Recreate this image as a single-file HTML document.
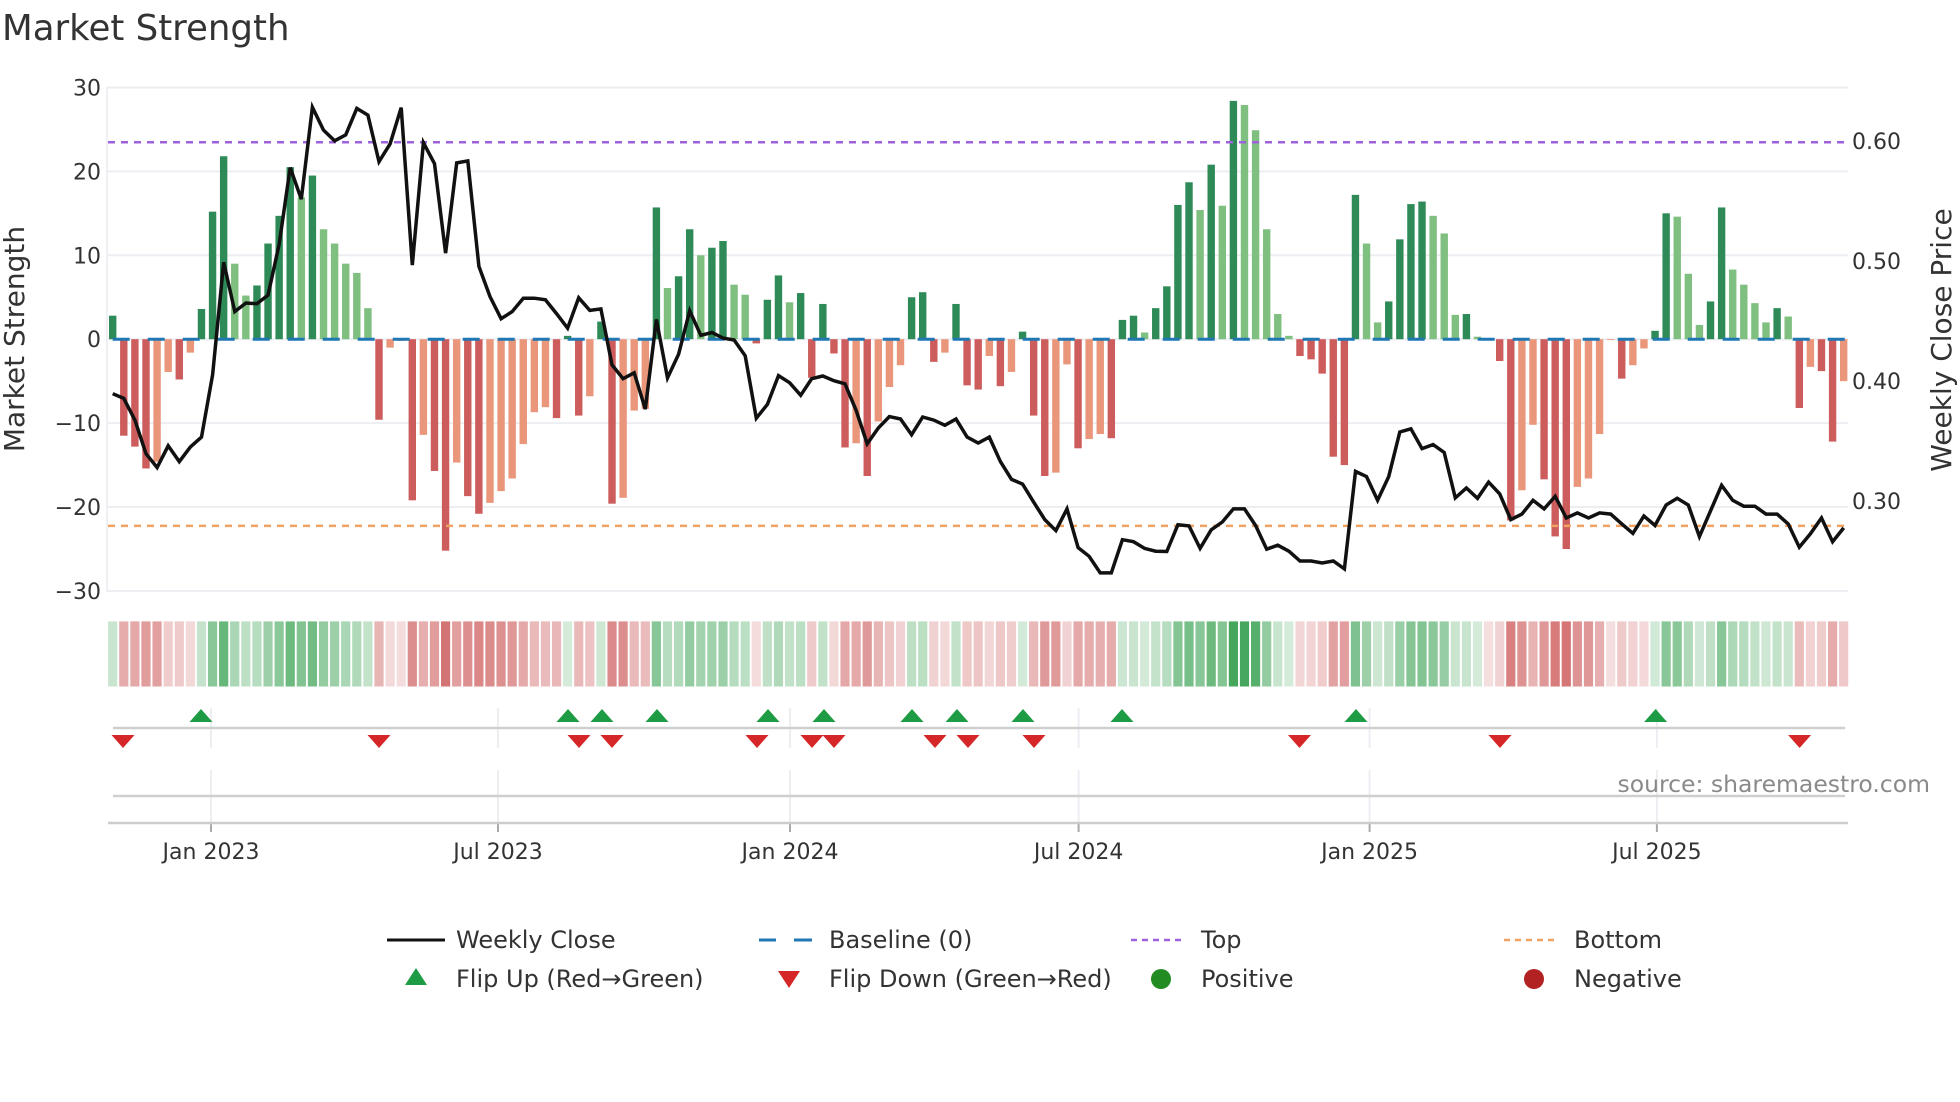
<!DOCTYPE html>
<html><head><meta charset="utf-8">
<style>
html,body{margin:0;padding:0;background:#fff;}
svg{display:block;font-family:"DejaVu Sans","Liberation Sans",sans-serif;}
</style></head>
<body>
<svg id="c" width="1960" height="1102" viewBox="0 0 1960 1102" xmlns="http://www.w3.org/2000/svg">
<text x="2" y="40" font-size="35.6" fill="#333">Market Strength</text>
<text x="16" y="339" font-size="28" fill="#333" text-anchor="middle" dominant-baseline="middle" transform="rotate(-90 16 339)">Market Strength</text>
<text x="1943" y="340" font-size="28" fill="#333" text-anchor="middle" dominant-baseline="middle" transform="rotate(-90 1943 340)">Weekly Close Price</text>
<g id="g"></g>
<text x="1930" y="792" font-size="23.5" fill="#8a8a8a" text-anchor="end">source: sharemaestro.com</text>
<g font-size="24" fill="#333">
<line x1="387" y1="940" x2="445" y2="940" stroke="#111" stroke-width="3"/>
<text x="456" y="948">Weekly Close</text>
<line x1="759" y1="940" x2="812" y2="940" stroke="#1f77b4" stroke-width="3" stroke-dasharray="17 18"/>
<line x1="794" y1="940" x2="812" y2="940" stroke="#1f77b4" stroke-width="3"/>
<text x="829" y="948">Baseline (0)</text>
<line x1="1131" y1="940" x2="1185" y2="940" stroke="#9d62dc" stroke-width="2.5" stroke-dasharray="6 5"/>
<text x="1201" y="948">Top</text>
<line x1="1504" y1="940" x2="1559" y2="940" stroke="#f0a263" stroke-width="2.5" stroke-dasharray="6 5"/>
<text x="1574" y="948">Bottom</text>
<polygon points="416,968 405,985 427,985" fill="#1e9b45"/>
<text x="456" y="987">Flip Up (Red→Green)</text>
<polygon points="778,971 800,971 789,988" fill="#d62728"/>
<text x="829" y="987">Flip Down (Green→Red)</text>
<circle cx="1161" cy="979" r="10" fill="#228b22"/>
<text x="1201" y="987">Positive</text>
<circle cx="1534" cy="979" r="10" fill="#b22222"/>
<text x="1574" y="987">Negative</text>
</g>
</svg>
<script>
(function(){
var NS="http://www.w3.org/2000/svg",g=document.getElementById("g");
function el(t,a){var e=document.createElementNS(NS,t);for(var k in a)e.setAttribute(k,a[k]);g.appendChild(e);return e;}
var V=[2.8,-11.5,-12.8,-15.4,-14.6,-3.9,-4.8,-1.6,3.6,15.2,21.8,9.0,5.2,6.4,11.4,14.7,20.5,16.9,19.5,13.1,11.4,9.0,7.9,3.7,-9.6,-1.0,-0.2,-19.2,-11.4,-15.7,-25.2,-14.7,-18.7,-20.8,
-19.5,-18.1,-16.6,-12.5,-8.7,-8.1,-9.4,0.4,-9.1,-6.8,2.1,-19.6,-18.9,-8.5,-8.3,15.7,6.1,7.5,13.1,10.0,10.9,11.7,6.5,5.3,-0.5,4.7,7.6,4.4,5.5,-4.6,4.2,
-1.7,-12.9,-12.4,-16.3,-9.8,-5.7,-3.1,5.0,5.6,-2.7,-1.6,4.2,-5.5,-6.0,-2.0,-5.6,-3.9,0.9,-9.1,-16.3,-15.9,-3.0,-13.0,-11.9,-11.3,-11.8,2.3,2.8,0.8,3.7,6.3,16.0,18.7,15.4,
20.8,15.9,28.4,27.9,24.9,13.1,3.0,0.4,-2.0,-2.4,-4.1,-14.0,-15.0,17.2,11.4,2.0,4.5,11.9,16.1,16.4,14.7,12.6,2.9,3.0,0.3,-0.1,-2.6,-21.6,-18.0,-10.2,-16.7,-23.5,
-25.0,-17.6,-16.6,-11.3,-0.1,-4.7,-3.1,-1.1,1.0,15.0,14.6,7.8,1.7,4.5,15.7,8.3,6.5,4.3,2.0,3.7,2.7,-8.2,-3.3,-3.8,-12.2,-5.0];
var P=[818,830,885,970,1005,950,990,953,928,770,485,610,588,590,568,440,245,325,92,150,177,162,95,112,230,185,93,492,182,235,462,233,228,495,
572,628,610,576,576,580,615,652,575,607,603,745,780,765,857,630,778,718,608,670,663,677,682,722,880,845,772,790,822,780,
773,785,793,860,945,905,876,882,922,877,885,898,882,928,943,928,990,1035,1047,1093,1137,1165,1110,1208,1230,1272,1272,1188,1193,1210,1217,1218,1150,
1153,1210,1163,1143,1110,1110,1152,1212,1202,1217,1242,1242,1247,1242,1262,1015,1028,1088,1028,915,907,957,947,967,1082,1057,1083,1042,1072,1137,1123,1088,
1110,1078,1133,1120,1133,1120,1123,1148,1172,1128,1152,1100,1083,1100,1180,1115,1050,1088,1103,1103,1123,1123,1148,1207,1173,1133,1193,1158];
var X0=112.7,DX=11.096,Y0=339.2,K=8.392;
function X(i){return X0+DX*i;}
function Y(v){return Y0-v*K;}
for(var v=-30;v<=30;v+=10){el("line",{x1:107,x2:1848,y1:Y(v),y2:Y(v),stroke:"#eceef2","stroke-width":2});
 el("text",{x:101,y:Y(v)+8,"font-size":22,fill:"#333","text-anchor":"end"}).textContent=(v<0?"\u2212"+(-v):""+v);}
el("line",{x1:107,x2:107,y1:87,y2:592,stroke:"#eef0f4","stroke-width":2});
[["0.60",141],["0.50",261],["0.40",381],["0.30",501]].forEach(function(a){el("text",{x:1852,y:a[1]+8,"font-size":22,fill:"#333"}).textContent=a[0];});
for(var i=0;i<V.length;i++){var v=V[i],pv=i?V[i-1]:0,c;
 if(v>=0)c=(v>=pv)?"#2e8b57":"#7fbf7f";else c=(v<pv)?"#cd5c5c":"#e9967a";
 var y1=Y(Math.max(v,0)),y2=Y(Math.min(v,0));
 el("rect",{x:X(i)-3.7,y:y1,width:7.4,height:Math.max(y2-y1,0.8),fill:c});
 var a=Math.min(1,0.2+0.72*Math.abs(v)/28);
 var hc=v>=0?"rgba(55,160,80,"+a.toFixed(2)+")":"rgba(205,90,90,"+a.toFixed(2)+")";
 el("rect",{x:X(i)-4.6,y:621.4,width:9.2,height:65.1,fill:hc});
}
el("line",{x1:112.7,x2:1848,y1:Y0,y2:Y0,stroke:"#1f77b4","stroke-width":3,"stroke-dasharray":"17 18"});
el("line",{x1:108,x2:1848,y1:142.3,y2:142.3,stroke:"#9d62dc","stroke-width":2.5,"stroke-dasharray":"7 6"});
el("line",{x1:108,x2:1848,y1:525.9,y2:525.9,stroke:"#f0a263","stroke-width":2.5,"stroke-dasharray":"7 6"});
var pts=[];for(var i=0;i<P.length;i++)pts.push(X(i).toFixed(1)+","+(87.5+(P[i]-42)*0.3946).toFixed(1));
el("polyline",{points:pts.join(" "),fill:"none",stroke:"#111","stroke-width":3.5,"stroke-linejoin":"miter"});
var ticks=[[211,"Jan 2023"],[498,"Jul 2023"],[790,"Jan 2024"],[1078.6,"Jul 2024"],[1369.6,"Jan 2025"],[1656.9,"Jul 2025"]];
ticks.forEach(function(t){
 el("line",{x1:t[0],x2:t[0],y1:708,y2:748,stroke:"#eceef2","stroke-width":2});
 el("line",{x1:t[0],x2:t[0],y1:770,y2:823,stroke:"#eceef2","stroke-width":2});
 el("line",{x1:t[0],x2:t[0],y1:823,y2:832,stroke:"#aaa","stroke-width":2});
 el("text",{x:t[0],y:859,"font-size":22,fill:"#333","text-anchor":"middle"}).textContent=t[1];
});
el("line",{x1:113,x2:1845,y1:728,y2:728,stroke:"#cfcfcf","stroke-width":2.5});
el("line",{x1:113,x2:1845,y1:796,y2:796,stroke:"#cfcfcf","stroke-width":2.5});
el("line",{x1:108,x2:1848,y1:823,y2:823,stroke:"#cccccc","stroke-width":2.5});
[201,568,602,657,768,824,912,957,1023,1122,1356,1655.6].forEach(function(x){
 el("polygon",{points:x+",709 "+(x-11.5)+",722 "+(x+11.5)+",722",fill:"#1e9b45"});});
[123,379,579,612,757,812,834,935,968,1034,1299.5,1500,1799.6].forEach(function(x){
 el("polygon",{points:(x-11.5)+",735 "+(x+11.5)+",735 "+x+",748",fill:"#d62728"});});
})();
</script>
</body></html>
